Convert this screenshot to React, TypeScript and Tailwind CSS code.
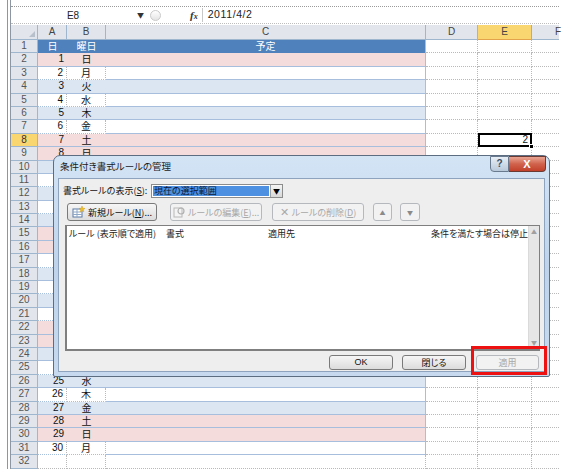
import React from 'react';

const WD = ['日', '月', '火', '水', '木', '金', '土'];

function RowHead({ n, sel }: { n: number; sel?: boolean }) {
  return (
    <div
      className={`w-[27px] shrink-0 border-b border-r border-[#9eb6ce] text-center text-[10px] leading-[12px] font-['Liberation_Sans',sans-serif] ${
        sel ? 'bg-[#f9d66f] text-[#333]' : 'bg-[#e2e6ec] text-[#555]'
      }`}
    >
      {n}
    </div>
  );
}

function Grey({ w, last }: { w: string; last?: boolean }) {
  return (
    <div
      className={`${w} shrink-0 bg-white border-b border-dotted border-[#b9b9b9] ${
        last ? '' : 'border-r'
      }`}
    />
  );
}

function DataRow({ r }: { r: number }) {
  const day = r - 1;
  const idx = (day - 1) % 7;
  const weekend = idx === 0 || idx === 6;
  const colored = weekend || r % 2 === 0;
  const bg = weekend ? 'bg-[#f3dcdb]' : r % 2 === 0 ? 'bg-[#dce6f2]' : 'bg-white';
  const vline = colored ? '' : 'border-r border-dotted border-r-[#b9b9b9]';
  const covered = r >= 10 && r <= 25;
  return (
    <div className="flex h-[13.4px]">
      <RowHead n={r} sel={r === 8} />
      <div
        className={`w-[29px] shrink-0 ${bg} border-b border-b-[#a7bfdc] ${vline} text-right pr-[3px] text-[10px] leading-[12px] text-[#111] font-['Liberation_Sans',sans-serif]`}
      >
        {covered ? null : day}
      </div>
      <div
        className={`w-[39px] shrink-0 ${bg} border-b border-b-[#a7bfdc] ${vline} text-center text-[10px] leading-[12px] text-[#111]`}
      >
        {covered ? null : WD[idx]}
      </div>
      <div className={`w-[320px] shrink-0 ${bg} border-b border-b-[#a7bfdc] border-r border-r-[#a7bfdc]`} />
      <Grey w="w-[52px]" />
      {r === 8 ? (
        <div className="w-[54px] shrink-0 relative bg-white border-b border-r border-dotted border-[#b9b9b9]">
          <div className="absolute left-[0px] top-[-1px] w-[54px] h-[14px] border-2 border-black text-right pr-[2px] text-[10px] leading-[10px] text-[#111] font-['Liberation_Sans',sans-serif]">
            2
          </div>
          <div className="absolute right-[-3px] bottom-[-3px] w-[5px] h-[5px] bg-black border border-white" />
        </div>
      ) : (
        <Grey w="w-[54px]" />
      )}
      <Grey w="w-[27px]" last />
    </div>
  );
}

function Btn({
  w,
  children,
  disabled,
  className = '',
}: {
  w: string;
  children: React.ReactNode;
  disabled?: boolean;
  className?: string;
}) {
  return (
    <div
      className={`${w} shrink-0 flex items-center justify-center whitespace-nowrap rounded-[3px] border text-[9px] leading-[11px] ${
        disabled
          ? 'border-[#b5b9bd] bg-[#f2f2f2] text-[#a8a8a8]'
          : 'border-[#7a7a7a] bg-gradient-to-b from-[#f6f6f6] to-[#dcdcdc] text-[#111]'
      } ${className}`}
    >
      {children}
    </div>
  );
}

export default function App() {
  const rows = Array.from({ length: 30 }, (_, i) => i + 2);
  return (
    <div className="w-[567px] h-[469px] bg-white relative overflow-hidden font-['Noto_Sans_CJK_JP','Noto_Sans',sans-serif]">
      <div className="ml-[7px] w-[552px] h-full border-l-[4px] border-double border-[#8d96a3] pt-[6px] flex flex-col">
        {/* formula bar */}
        <div className="h-[18px] shrink-0 border-t border-dotted border-[#9a9a9a] border-b border-b-solid border-b-[#bdbdbd] flex items-center text-[10px] text-[#222]">
          <div className="w-[124px] text-center font-['Liberation_Sans',sans-serif]">E8</div>
          <div className="text-[7px] text-[#333] ml-[2px]">▼</div>
          <div className="ml-[6px] w-[11px] h-[11px] rounded-full border border-[#c9c9c9] bg-gradient-to-b from-white to-[#e4e4e4]" />
          <div className="ml-[29px] italic font-bold text-[11px] font-['Liberation_Serif',serif] text-[#333]">
            f<span className="text-[8px]">x</span>
          </div>
          <div className="ml-[4px] w-px h-[14px] bg-[#c8c8c8]" />
          <div className="ml-[5px] font-['Liberation_Sans',sans-serif] text-[10.5px] tracking-[0.6px]">2011/4/2</div>
        </div>
        {/* column header */}
        <div className="h-[15px] shrink-0 flex mt-[1px] text-[10px] leading-[13px] text-[#444] font-['Liberation_Sans',sans-serif]">
          <div className="w-[27px] shrink-0 bg-[#e2e6ec] border-b border-r border-[#9eb6ce] relative">
            <div className="absolute right-[2px] bottom-[2px] w-0 h-0 border-l-[6px] border-l-transparent border-b-[6px] border-b-[#b8c0cb]" />
          </div>
          {[
            ['A', 'w-[29px]'],
            ['B', 'w-[39px]'],
            ['C', 'w-[320px]'],
            ['D', 'w-[52px]'],
            ['E', 'w-[54px]'],
            ['F', 'w-[27px]'],
          ].map(([l, w]) => (
            <div
              key={l}
              className={`${w} shrink-0 text-center border-b border-r border-[#9eb6ce] ${
                l === 'E' ? 'bg-[#f9d66f] border-[#e2a34a]' : 'bg-[#e2e6ec]'
              } ${l === 'F' ? 'text-left pl-[23px] border-r-0' : ''}`}
            >
              {l}
            </div>
          ))}
        </div>
        {/* row 1 */}
        <div className="flex h-[13.4px]">
          <RowHead n={1} />
          <div className="w-[29px] shrink-0 bg-[#4f81bd] text-white text-center text-[10px] leading-[12px]">日</div>
          <div className="w-[39px] shrink-0 bg-[#4f81bd] text-white text-center text-[10px] leading-[12px]">曜日</div>
          <div className="w-[320px] shrink-0 bg-[#4f81bd] text-white text-center text-[10px] leading-[12px] border-r border-r-[#a7bfdc]">
            予定
          </div>
          <Grey w="w-[52px]" />
          <Grey w="w-[54px]" />
          <Grey w="w-[27px]" last />
        </div>
        {rows.map((r) => (
          <DataRow key={r} r={r} />
        ))}
        {/* row 32 */}
        <div className="flex h-[13.4px]">
          <RowHead n={32} />
          <Grey w="w-[29px]" />
          <Grey w="w-[39px]" />
          <Grey w="w-[320px]" />
          <Grey w="w-[52px]" />
          <Grey w="w-[54px]" />
          <Grey w="w-[27px]" last />
        </div>
      </div>

      {/* dialog */}
      <div className="absolute left-[53px] top-[155px] w-[497px] h-[222px] rounded-t-[7px] rounded-b-[2px] border border-[#5c6d82] bg-gradient-to-b from-[#d3e4f5] via-[#bfd4eb] to-[#c6d9ee] flex flex-col text-[9px] text-[#111] [font-feature-settings:'palt']">
        {/* title bar */}
        <div className="h-[22px] shrink-0 flex items-start justify-between">
          <div className="pl-[6px] pt-[4px] text-[9.5px] leading-[13px] text-[#1b1b1b] whitespace-nowrap">条件付き書式ルールの管理</div>
          <div className="flex mr-[3px]">
            <div className="w-[19px] h-[16px] rounded-bl-[4px] border border-[#6a7a8e] bg-gradient-to-b from-[#e8eef5] to-[#b9c9da] flex items-center justify-center text-[10px] font-bold text-[#3c4d63] leading-none font-['Liberation_Sans',sans-serif]">
              ?
            </div>
            <div className="w-[37px] h-[16px] rounded-br-[4px] border border-l-0 border-[#6a3a33] bg-gradient-to-b from-[#e8a493] via-[#d0624c] to-[#c2402b] flex items-center justify-center text-white font-bold text-[11px] leading-none font-['Liberation_Sans',sans-serif]">
              X
            </div>
          </div>
        </div>
        {/* client */}
        <div className="mx-[4px] h-[194px] shrink-0 border border-[#8ea3bd] bg-[#eeeeee] flex flex-col">
          {/* label row */}
          <div className="mt-[5px] h-[14px] flex items-center">
            <div className="w-[92px] pl-[4px] shrink-0 leading-[12px] whitespace-nowrap">
              書式ルールの表示(<span className="underline">S</span>):
            </div>
            <div className="w-[132px] h-[14px] border border-[#8c8c8c] bg-white flex">
              <div className="flex-1 m-[1px] bg-[#4d8fe0] text-[#0b1a3a] leading-[10px] pl-[1px] whitespace-nowrap">現在の選択範囲</div>
              <div className="w-[12px] border-l border-[#a0a0a0] bg-gradient-to-b from-[#f4f4f4] to-[#d8d8d8] flex items-center justify-center text-[7px] text-black">
                ▼
              </div>
            </div>
          </div>
          {/* toolbar */}
          <div className="mt-[5px] h-[18px] flex pl-[8px]">
            <Btn w="w-[90px]" className="gap-[3px]">
              <svg width="13" height="12" viewBox="0 0 13 12">
                <rect x="1" y="3" width="9" height="8" fill="#fff" stroke="#5a7aa6" />
                <line x1="1" y1="6" x2="10" y2="6" stroke="#8fa8c8" />
                <line x1="1" y1="8.5" x2="10" y2="8.5" stroke="#8fa8c8" />
                <line x1="5" y1="3" x2="5" y2="11" stroke="#8fa8c8" />
                <path d="M10 0 L10.8 2.2 L13 2.5 L11.2 3.6 L11.8 6 L10 4.6 L8.2 6 L8.8 3.6 L7 2.5 L9.2 2.2 Z" fill="#f3c321" stroke="#c9900c" strokeWidth="0.4" />
              </svg>
              <span>
                新規ルール(<span className="underline">N</span>)...
              </span>
            </Btn>
            <Btn w="w-[92px]" disabled className="ml-[13px] gap-[3px]">
              <svg width="12" height="12" viewBox="0 0 12 12">
                <rect x="1" y="2" width="8" height="9" fill="#f4f4f4" stroke="#b8b8b8" />
                <circle cx="8" cy="5" r="3" fill="none" stroke="#b0b0b0" strokeWidth="1.2" />
              </svg>
              <span>
                ルールの編集(<span className="underline">E</span>)...
              </span>
            </Btn>
            <Btn w="w-[92px]" disabled className="ml-[10px] gap-[3px]">
              <span className="text-[11px] leading-none font-['Liberation_Sans',sans-serif] text-[#a9a9a9]">✕</span>
              <span>
                ルールの削除(<span className="underline">D</span>)
              </span>
            </Btn>
            <Btn w="w-[19px]" disabled className="ml-[9px]">
              <span className="text-[6px] text-[#8a8a8a]">▲</span>
            </Btn>
            <Btn w="w-[20px]" disabled className="ml-[8px]">
              <span className="text-[6px] text-[#8a8a8a]">▼</span>
            </Btn>
          </div>
          {/* list */}
          <div className="mt-[4px] ml-[6px] w-[475px] h-[126px] border border-[#7f7f7f] border-b-2 border-l-2 bg-white flex">
            <div className="flex-1 flex flex-col">
              <div className="h-[15px] flex items-center leading-[12px] text-[#222] whitespace-nowrap">
                <div className="w-[99px] pl-[2px] shrink-0">ルール (表示順で適用)</div>
                <div className="w-[102px] shrink-0">書式</div>
                <div className="w-[163px] shrink-0">適用先</div>
                <div className="flex-1">条件を満たす場合は停止</div>
              </div>
            </div>
            <div className="w-[14px] bg-[#e6e6e6] border-l border-[#dadada] flex flex-col justify-between items-center py-[3px] text-[6px] text-[#a0a0a0] leading-none">
              <span>▲</span>
              <span>▼</span>
            </div>
          </div>
          {/* bottom buttons */}
          <div className="mt-[4px] h-[15px] flex justify-end pr-[5px]">
            <Btn w="w-[64px]" className="font-['Liberation_Sans',sans-serif]">OK</Btn>
            <Btn w="w-[64px]" className="ml-[9px]">閉じる</Btn>
            <Btn w="w-[63px]" disabled className="ml-[10px]">適用</Btn>
          </div>
        </div>
        {/* red highlight */}
        <div className="absolute left-[417px] top-[190px] w-[76px] h-[29px] border-[3px] border-[#ee1111]" />
      </div>
    </div>
  );
}
